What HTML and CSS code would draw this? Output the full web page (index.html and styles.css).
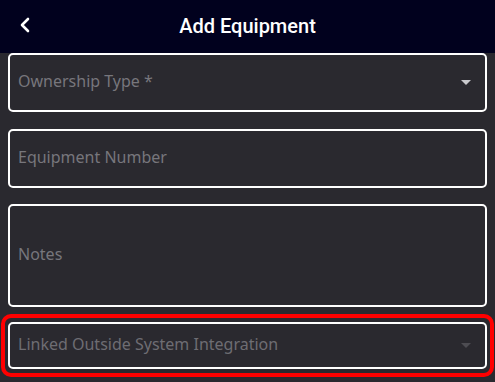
FILE: index.html
```html
<!DOCTYPE html>
<html lang="en">

<head>
    <meta charset="UTF-8">
    <meta name="viewport" content="width=device-width, initial-scale=1.0">
    <title>Add Equipment</title>
    <link rel="stylesheet" href="styles.css">
</head>

<body>
    <header class="header">
        <button class="back-btn" aria-label="Back">
            <svg width="12" height="16" viewBox="0 0 12 16">
                <path d="M9 2 L3 8 L9 14" fill="none" stroke="#fff" stroke-width="2.6" stroke-linecap="round" stroke-linejoin="round" />
            </svg>
        </button>
        <h1>Add Equipment</h1>
    </header>

    <main class="form">
        <div class="field field-select">
            <span class="placeholder">Ownership Type *</span>
            <span class="caret"></span>
        </div>

        <div class="field field-number">
            <span class="placeholder">Equipment Number</span>
        </div>

        <div class="field field-notes">
            <span class="placeholder">Notes</span>
        </div>

        <div class="highlight">
            <div class="field field-select field-disabled">
                <span class="placeholder">Linked Outside System Integration</span>
                <span class="caret"></span>
            </div>
        </div>
    </main>
</body>

</html>
```

FILE: styles.css
```css
* {
    box-sizing: border-box;
    margin: 0;
    padding: 0;
}

body {
    font-family: 'Noto Sans', sans-serif;
    background-color: #2a292f;
    width: 495px;
    height: 382px;
    overflow: hidden;
}

.header {
    height: 53px;
    background-color: #01011e;
    display: flex;
    align-items: center;
    justify-content: center;
    position: relative;
}

.header h1 {
    color: #fff;
    font-family: 'Roboto', sans-serif;
    font-weight: 500;
    font-size: 20px;
    margin-top: -1px;
}

.back-btn {
    position: absolute;
    left: 19px;
    top: 17px;
    background: none;
    border: none;
    display: flex;
}

.form {
    display: flex;
    flex-direction: column;
    padding: 0 8px;
}

.field {
    height: 59px;
    border: 2px solid #fff;
    border-radius: 5px;
    display: flex;
    align-items: center;
    justify-content: space-between;
    padding: 0 14px 0 8px;
    margin-bottom: 17px;
}

.field-number {
    margin-bottom: 16px;
}

.placeholder {
    color: #77767c;
    font-size: 16px;
    margin-top: -3px;
}

.field-notes {
    height: 103px;
    margin-bottom: 7px;
}

.caret {
    width: 0;
    height: 0;
    border-left: 5px solid transparent;
    border-right: 5px solid transparent;
    border-top: 5px solid #c9c9cd;
}

.highlight {
    margin: 0 -7px;
    border: 4px solid #ff0000;
    border-radius: 10px;
    padding: 4px 3px;
}

.field-disabled {
    height: 47px;
    margin-bottom: 0;
}

.field-disabled .placeholder {
    color: #6e6d73;
}

.field-disabled .caret {
    border-top-color: #4d4c52;
}
```
